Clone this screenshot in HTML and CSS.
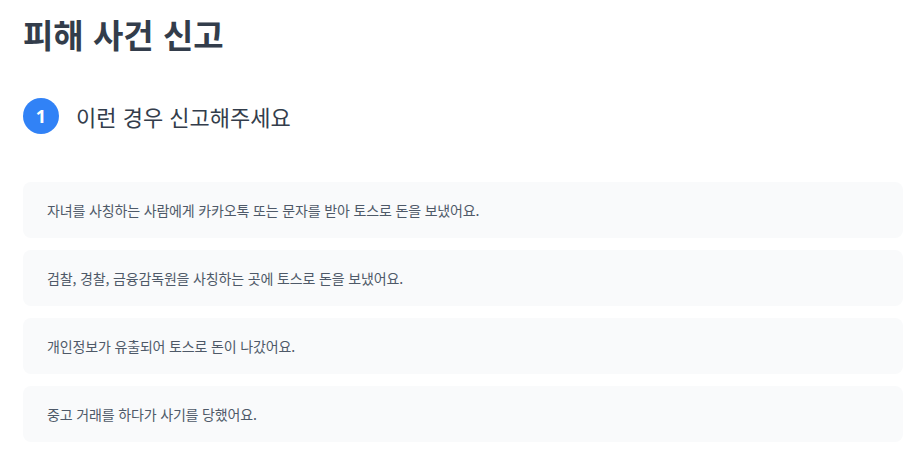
FILE: index.html
```html
<!DOCTYPE html>
<html lang="ko">
<head>
<meta charset="utf-8">
<title>피해 사건 신고</title>
<link rel="stylesheet" href="styles.css">
</head>
<body>
<main class="page">
  <h1 class="title">피해 사건 신고</h1>
  <section class="step">
    <div class="step-head">
      <span class="step-num">1</span>
      <h2 class="step-title">이런 경우 신고해주세요</h2>
    </div>
    <ul class="cases">
      <li class="case">자녀를 사칭하는 사람에게 카카오톡 또는 문자를 받아 토스로 돈을 보냈어요.</li>
      <li class="case">검찰, 경찰, 금융감독원을 사칭하는 곳에 토스로 돈을 보냈어요.</li>
      <li class="case">개인정보가 유출되어 토스로 돈이 나갔어요.</li>
      <li class="case">중고 거래를 하다가 사기를 당했어요.</li>
    </ul>
  </section>
</main>
</body>
</html>
```

FILE: styles.css
```css
* { box-sizing: border-box; }
html, body { margin: 0; padding: 0; background: #ffffff; }
body {
  font-family: "Noto Sans CJK KR", "Noto Sans", sans-serif;
  color: #333d4b;
}
.page {
  padding: 8px 13px 0 23px;
}
.title {
  margin: 0;
  font-size: 33px;
  line-height: 52px;
  font-weight: 700;
  color: #333d4b;
}
.step {
  margin-top: 38px;
}
.step-head {
  display: flex;
  align-items: center;
  gap: 17px;
  height: 36px;
}
.step-num {
  width: 36px;
  height: 36px;
  border-radius: 50%;
  background: #3182f6;
  color: #ffffff;
  font-size: 18px;
  font-weight: 700;
  display: flex;
  align-items: center;
  justify-content: center;
  font-family: "Noto Sans", sans-serif;
}
.step-title {
  margin: 0;
  font-size: 22px;
  font-weight: 400;
  color: #333d4b;
}
.cases {
  list-style: none;
  margin: 48px 0 0;
  padding: 0;
  display: flex;
  flex-direction: column;
  gap: 12px;
}
.case {
  height: 56px;
  display: flex;
  align-items: center;
  padding: 0 24px;
  background: #f9fafb;
  border-radius: 8px;
  font-size: 14px;
  letter-spacing: -0.15px;
  color: #4e5968;
}
```
